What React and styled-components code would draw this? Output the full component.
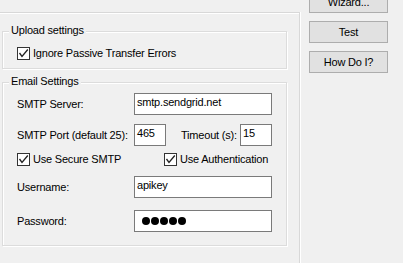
import styled, { createGlobalStyle } from "styled-components"

const GlobalStyle = createGlobalStyle`
  html, body {
    margin: 0;
    padding: 0;
    background: #f0f0f0;
  }
  body {
    font-family: "Liberation Sans", Arial, sans-serif;
    font-size: 11px;
    letter-spacing: -0.2px;
    color: #000;
  }
`

const Window = styled.div`
  display: flex;
  align-items: flex-start;
  width: 403px;
  height: 263px;
  overflow: hidden;
`

const Panel = styled.div`
  box-sizing: border-box;
  width: 300px;
  height: 270px;
  margin-top: 12px;
  padding-left: 2px;
  border-top: 1px solid #d8d8d8;
  border-right: 1px solid #d8d8d8;
  box-shadow: inset 0 1px 0 #fff, 1px 0 0 #fff;
  display: flex;
  flex-direction: column;
`

const Group = styled.div`
  box-sizing: border-box;
  width: 285px;
  height: ${(p) => p.$h}px;
  margin-top: ${(p) => p.$top}px;
  padding-left: 14px;
  border: 1px solid #dcdcdc;
  box-shadow: inset 1px 1px 0 #fff, 1px 1px 0 #fff;
  display: flex;
  flex-direction: column;
`

const Caption = styled.span`
  align-self: flex-start;
  margin: -8px 0 0 -8px;
  padding: 0 2px;
  line-height: 13px;
  background: #f0f0f0;
`

const Row = styled.div`
  display: flex;
  align-items: center;
  height: 22px;
  margin-top: ${(p) => p.$gap}px;
`

const CheckRow = styled.div`
  display: grid;
  grid-template-columns: ${(p) => p.$cols || "auto"};
  justify-content: start;
  height: 13px;
  margin-top: ${(p) => p.$gap}px;
`

const Label = styled.span`
  flex-shrink: 0;
  width: ${(p) => p.$w || 117}px;
  margin-left: ${(p) => p.$ml || 0}px;
  line-height: 13px;
  white-space: nowrap;
`

const Field = styled.div`
  box-sizing: border-box;
  flex-shrink: 0;
  width: ${(p) => p.$w}px;
  height: 22px;
  padding: 2px 2px;
  border: 1px solid #7a7a7a;
  background: #fff;
  line-height: 13px;
  white-space: nowrap;
`

const Secret = styled(Field)`
  display: flex;
  align-items: center;
  gap: 1px;
  padding: 0 0 0 7px;
`

const Dot = styled.span`
  width: 8px;
  height: 8px;
  border-radius: 50%;
  background: #000;
`

const CheckItem = styled.label`
  display: flex;
  align-items: center;
  gap: 3px;
  line-height: 13px;
  white-space: nowrap;
`

const Box = styled.span`
  box-sizing: border-box;
  flex-shrink: 0;
  width: 13px;
  height: 13px;
  border: 1px solid #333;
  background: #fff;
  display: flex;
`

const Buttons = styled.div`
  display: flex;
  flex-direction: column;
  gap: 8px;
  margin: -9px 0 0 9px;
`

const Button = styled.button`
  box-sizing: border-box;
  width: 79px;
  height: 22px;
  padding: 0;
  border: 1px solid #adadad;
  background: #e1e1e1;
  color: #000;
  font: inherit;
  letter-spacing: inherit;
`

const Check = ({ children }) => (
  <CheckItem>
    <Box>
      <svg width="11" height="11" viewBox="0 0 11 11">
        <path d="M1.5 5 L4 8.5 L9.8 1.5" fill="none" stroke="#222" strokeWidth="1.3" />
      </svg>
    </Box>
    <span>{children}</span>
  </CheckItem>
)

export default function App() {
  return (
    <>
      <GlobalStyle />
      <Window>
        <Panel>
          <Group $top={18} $h={38}>
            <Caption>Upload settings</Caption>
            <CheckRow $gap={10}>
              <Check>Ignore Passive Transfer Errors</Check>
            </CheckRow>
          </Group>
          <Group $top={13} $h={164}>
            <Caption>Email Settings</Caption>
            <Row $gap={5}>
              <Label>SMTP Server:</Label>
              <Field $w={138}>smtp.sendgrid.net</Field>
            </Row>
            <Row $gap={9}>
              <Label>SMTP Port (default 25):</Label>
              <Field $w={32}>465</Field>
              <Label $w={59} $ml={15}>Timeout (s):</Label>
              <Field $w={32}>15</Field>
            </Row>
            <CheckRow $gap={7} $cols="147px auto">
              <Check>Use Secure SMTP</Check>
              <Check>Use Authentication</Check>
            </CheckRow>
            <Row $gap={10}>
              <Label>Username:</Label>
              <Field $w={138}>apikey</Field>
            </Row>
            <Row $gap={12}>
              <Label>Password:</Label>
              <Secret $w={138}>
                {[0, 1, 2, 3, 4].map((i) => (
                  <Dot key={i} />
                ))}
              </Secret>
            </Row>
          </Group>
        </Panel>
        <Buttons>
          <Button>Wizard...</Button>
          <Button>Test</Button>
          <Button>How Do I?</Button>
        </Buttons>
      </Window>
    </>
  )
}
